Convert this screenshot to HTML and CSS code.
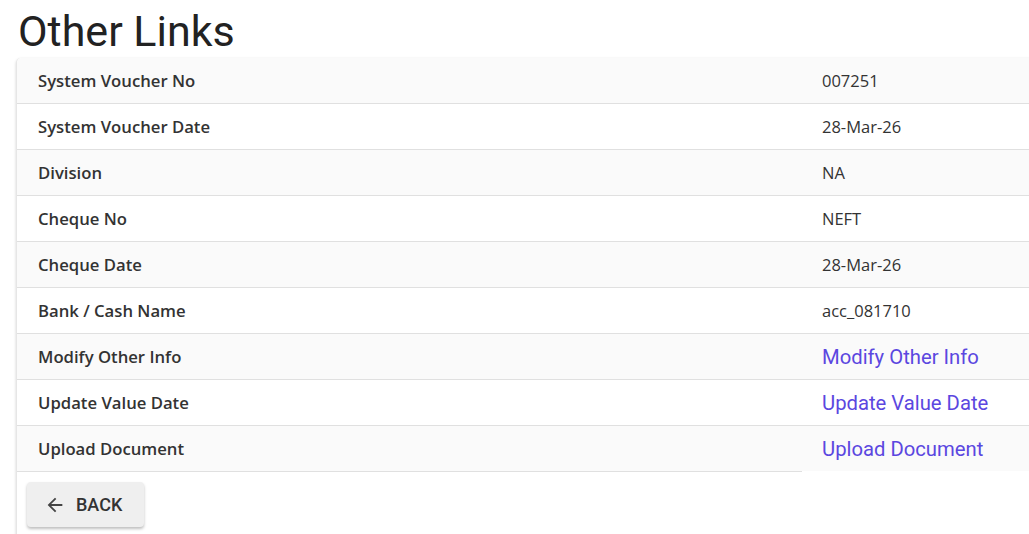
FILE: index.html
```html
<!DOCTYPE html>
<html lang="en">

<head>
    <meta charset="UTF-8">
    <meta name="viewport" content="width=device-width, initial-scale=1.0">
    <title>Other Links</title>
    <link rel="stylesheet" href="styles.css">
</head>

<body>
    <h1 class="page-title">Other Links</h1>

    <div class="card">
        <div class="info-table">
            <div class="row">
                <div class="label">System Voucher No</div>
                <div class="value">007251</div>
            </div>
            <div class="row">
                <div class="label">System Voucher Date</div>
                <div class="value">28-Mar-26</div>
            </div>
            <div class="row">
                <div class="label">Division</div>
                <div class="value">NA</div>
            </div>
            <div class="row">
                <div class="label">Cheque No</div>
                <div class="value">NEFT</div>
            </div>
            <div class="row">
                <div class="label">Cheque Date</div>
                <div class="value">28-Mar-26</div>
            </div>
            <div class="row">
                <div class="label">Bank / Cash Name</div>
                <div class="value">acc_081710</div>
            </div>
            <div class="row">
                <div class="label">Modify Other Info</div>
                <div class="value"><a href="#" class="link">Modify Other Info</a></div>
            </div>
            <div class="row">
                <div class="label">Update Value Date</div>
                <div class="value"><a href="#" class="link">Update Value Date</a></div>
            </div>
            <div class="row">
                <div class="label">Upload Document</div>
                <div class="value"><a href="#" class="link">Upload Document</a></div>
            </div>
        </div>
        <div class="table-end"></div>

        <button class="back-btn">
            <svg class="back-icon" viewBox="0 0 24 24" width="22" height="22">
                <path d="M20 11H7.83l5.59-5.59L12 4l-8 8 8 8 1.41-1.41L7.83 13H20v-2z" fill="currentColor"/>
            </svg>
            BACK
        </button>
    </div>
</body>

</html>
```

FILE: styles.css
```css
html,
body {
    overflow: hidden;
}

body {
    margin: 0;
    padding: 0 0 0 16px;
    background-color: #fff;
    color: #333;
    font-family: "Open Sans", sans-serif;
}

.page-title {
    font-family: Roboto, sans-serif;
    font-weight: 400;
    font-size: 43px;
    line-height: 52px;
    margin: 5px 0 0 2px;
    color: #222;
}

.card {
    width: 1040px;
    min-height: 520px;
    margin-top: 1px;
    background: #fff;
    border-left: 1px solid #e6e6e6;
    border-top-left-radius: 5px;
    box-shadow: 0px 1px 3px rgba(0, 0, 0, 0.18);
}

.row {
    display: flex;
    height: 45px;
    align-items: center;
    border-bottom: 1px solid #e0e0e0;
}

.row:nth-child(odd) {
    background-color: #fafafa;
}

.row:first-child {
    border-top-left-radius: 5px;
}

.row:last-child {
    border-bottom: none;
}

.label {
    width: 784px;
    padding-left: 21px;
    font-weight: 600;
    font-size: 16.7px;
    color: #333;
}

.value {
    font-size: 16.5px;
    color: #333;
}

.link {
    font-family: Roboto, sans-serif;
    font-size: 20.25px;
    color: #5b47e0;
    text-decoration: none;
}

.table-end {
    width: 785px;
    border-top: 1px solid #e0e0e0;
}

.back-btn {
    display: flex;
    align-items: center;
    gap: 10px;
    margin: 10px 0 0 10px;
    width: 117px;
    height: 45px;
    padding: 0 0 0 17px;
    font-family: Roboto, sans-serif;
    font-weight: 500;
    font-size: 18px;
    color: #333;
    background-color: #efefef;
    border: none;
    border-radius: 4px;
    box-shadow: 0px 2px 3px rgba(0, 0, 0, 0.25);
    cursor: pointer;
}

.back-icon {
    color: #444;
}
```
